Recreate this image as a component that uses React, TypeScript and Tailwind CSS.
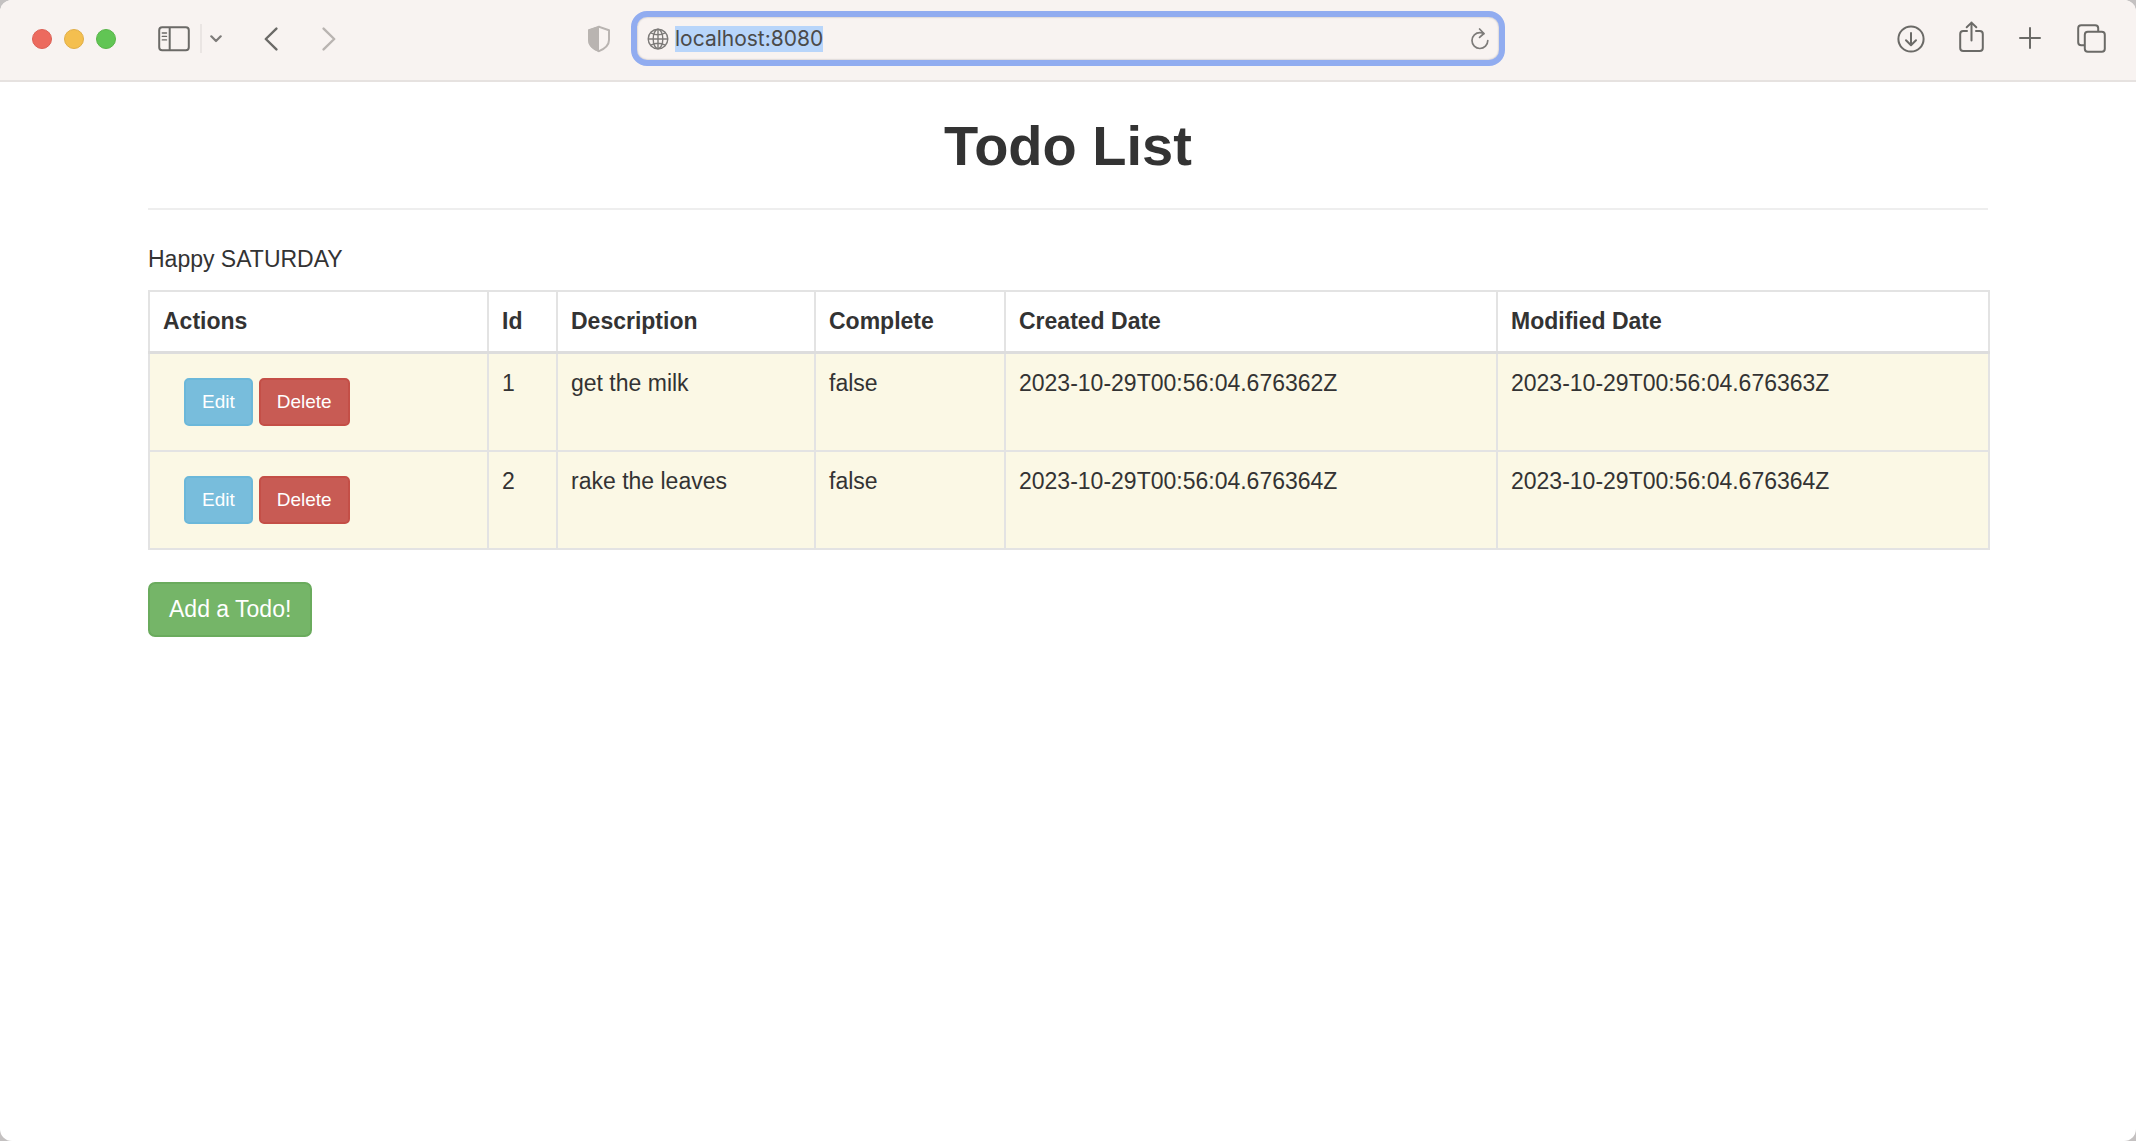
import { useEffect, useRef, type ReactNode } from "react";

const todos = [
  {
    id: 1,
    description: "get the milk",
    complete: "false",
    created: "2023-10-29T00:56:04.676362Z",
    modified: "2023-10-29T00:56:04.676363Z",
  },
  {
    id: 2,
    description: "rake the leaves",
    complete: "false",
    created: "2023-10-29T00:56:04.676364Z",
    modified: "2023-10-29T00:56:04.676364Z",
  },
];

const columns = [
  { title: "Actions", width: "w-[339px]" },
  { title: "Id", width: "w-[69px]" },
  { title: "Description", width: "w-[258px]" },
  { title: "Complete", width: "w-[190px]" },
  { title: "Created Date", width: "w-[492px]" },
  { title: "Modified Date", width: "w-[492px]" },
];

function IconButton({
  label,
  className = "",
  children,
}: {
  label: string;
  className?: string;
  children: ReactNode;
}) {
  return (
    <button
      type="button"
      aria-label={label}
      className={`flex shrink-0 items-center justify-center text-[#6b6a67] ${className}`}
    >
      {children}
    </button>
  );
}

function SidebarIcon() {
  return (
    <svg width="32" height="26" viewBox="0 0 32 26" fill="none" stroke="currentColor" strokeWidth="2">
      <rect x="1.2" y="1.2" width="29.6" height="23" rx="3" />
      <path d="M11.7 1.2v23" />
      <path d="M4.3 7h4.2M4.3 10.4h4.2M4.3 13.9h4.2" strokeWidth="1.4" strokeLinecap="round" />
    </svg>
  );
}

function ShieldIcon() {
  return (
    <svg width="24" height="28" viewBox="0 0 24 28" fill="none">
      <path
        d="M12 1.8 22 5.2V15c0 5.4-4 8.6-10 11.2C6 23.6 2 20.4 2 15V5.2Z"
        stroke="#b9b4b1"
        strokeWidth="2"
        strokeLinejoin="round"
      />
      <path d="M12 1 1.2 4.7V15c0 6 4.3 9.4 10.8 12.2Z" fill="#b9b4b1" />
    </svg>
  );
}

function GlobeIcon() {
  return (
    <svg width="22" height="22" viewBox="0 0 22 22" fill="none" stroke="#7d7b79" strokeWidth="1.4">
      <circle cx="11" cy="11" r="9.8" />
      <ellipse cx="11" cy="11" rx="4.8" ry="9.8" />
      <path d="M11 1.2v19.6M1.2 11h19.6M3.8 4.8c4.3 2.4 10.1 2.4 14.4 0M3.8 17.2c4.3-2.4 10.1-2.4 14.4 0" />
    </svg>
  );
}

function ReloadIcon() {
  return (
    <svg width="18" height="22" viewBox="0 0 18 22" fill="none" stroke="#7d7b79" strokeWidth="1.7" strokeLinecap="round" strokeLinejoin="round">
      <path d="M16.8 12.6A7.9 7.9 0 1 1 9 4.7c1.300 0 2.600.2 3.800.8" />
      <path d="M8.600 1 12.900 5.500 8.600 9.400" />
    </svg>
  );
}

function DownloadIcon() {
  return (
    <svg width="28" height="28" viewBox="0 0 28 28" fill="none" stroke="currentColor" strokeWidth="2" strokeLinecap="round" strokeLinejoin="round">
      <circle cx="14" cy="14" r="12.6" />
      <path d="M14 8v12M9 15.3l5 4.9 5-4.9" />
    </svg>
  );
}

function ShareIcon() {
  return (
    <svg width="25" height="32" viewBox="0 0 25 32" fill="none" stroke="currentColor" strokeWidth="2" strokeLinecap="round" strokeLinejoin="round">
      <path d="M8 10H4.2A3 3 0 0 0 1.2 13v14a3 3 0 0 0 3 3h16.600a3 3 0 0 0 3-3V13a3 3 0 0 0-3-3H17" />
      <path d="M12.5 19.5V1.6M7.7 6.3l4.8-4.7 4.8 4.7" />
    </svg>
  );
}

function PlusIcon() {
  return (
    <svg width="22" height="22" viewBox="0 0 22 22" fill="none" stroke="currentColor" strokeWidth="2" strokeLinecap="round">
      <path d="M11 1v20M1 11h20" />
    </svg>
  );
}

function TabsIcon() {
  return (
    <svg width="29" height="29" viewBox="0 0 29 29" fill="none" stroke="currentColor" strokeWidth="2">
      <rect x="7.8" y="7.8" width="20" height="20" rx="3" />
      <path d="M7.8 21.2H4.2a3 3 0 0 1-3-3v-14a3 3 0 0 1 3-3h14a3 3 0 0 1 3 3v3.6" />
    </svg>
  );
}

function Toolbar() {
  const address = useRef<HTMLInputElement>(null);

  useEffect(() => {
    address.current?.focus();
    address.current?.select();
  }, []);

  return (
    <header className="flex h-[82px] items-center border-b-2 border-[#e6e2e0] bg-[#f8f3f1] pb-[3px]">
      <div className="flex flex-1 items-center pl-8">
        <div className="flex gap-3">
          <button type="button" aria-label="Close window" className="size-5 rounded-full border border-[#dc6055] bg-[#ec6a5e]" />
          <button type="button" aria-label="Minimize window" className="size-5 rounded-full border border-[#e0ae48] bg-[#f4bf4f]" />
          <button type="button" aria-label="Zoom window" className="size-5 rounded-full border border-[#58b549] bg-[#61c554]" />
        </div>
        <IconButton label="Show sidebar" className="ml-[42px]">
          <SidebarIcon />
        </IconButton>
        <div className="ml-[10px] h-[29px] w-[2px] bg-[#eae5e3]" />
        <IconButton label="Sidebar options" className="ml-2">
          <svg width="12" height="8" viewBox="0 0 12 8" fill="none" stroke="#7d7b79" strokeWidth="2.2" strokeLinecap="round" strokeLinejoin="round">
            <path d="M1.3 1.3 6 6l4.7-4.7" />
          </svg>
        </IconButton>
        <IconButton label="Back" className="ml-[42px]">
          <svg width="14" height="24" viewBox="0 0 14 24" fill="none" stroke="currentColor" strokeWidth="2.4" strokeLinecap="round" strokeLinejoin="round">
            <path d="M12.4 1.6 1.8 12l10.600 10.400" />
          </svg>
        </IconButton>
        <IconButton label="Forward" className="ml-[44px]">
          <svg width="14" height="24" viewBox="0 0 14 24" fill="none" stroke="#b9b4b1" strokeWidth="2.4" strokeLinecap="round" strokeLinejoin="round">
            <path d="M1.6 1.6 12.200 12 1.600 22.400" />
          </svg>
        </IconButton>
        <IconButton label="Privacy report" className="mr-5 ml-auto">
          <ShieldIcon />
        </IconButton>
      </div>

      <div className="flex h-[55px] w-[874px] shrink items-center rounded-2xl border-6 border-[#91acf0] px-[10px] shadow-[inset_0_0_2px_#a8a5a8]">
        <GlobeIcon />
        <input
          ref={address}
          type="text"
          aria-label="Address"
          defaultValue="localhost:8080"
          className="ml-[6px] h-[26px] min-w-0 flex-1 bg-transparent font-['Inter',sans-serif] text-[21px] leading-[26px] text-[#4b4a49] outline-none selection:bg-[#b8d5fa] selection:text-[#4b4a49]"
        />
        <IconButton label="Reload page">
          <ReloadIcon />
        </IconButton>
      </div>

      <div className="flex flex-1 items-center justify-end pr-[30px] pl-[2px]">
        <IconButton label="Downloads">
          <DownloadIcon />
        </IconButton>
        <IconButton label="Share" className="ml-[34px] pb-1">
          <ShareIcon />
        </IconButton>
        <IconButton label="New tab" className="ml-[35px] pb-[2px]">
          <PlusIcon />
        </IconButton>
        <IconButton label="Tab overview" className="ml-[36px]">
          <TabsIcon />
        </IconButton>
      </div>
    </header>
  );
}

function TodoTable() {
  return (
    <table className="w-full table-fixed border-collapse border-2 border-[#e3e3e3]">
      <thead>
        <tr>
          {columns.map((column) => (
            <th
              key={column.title}
              scope="col"
              className={`${column.width} border-2 border-b-3 border-[#e3e3e3] border-b-[#dddddd] p-[13px] text-left font-bold`}
            >
              {column.title}
            </th>
          ))}
        </tr>
      </thead>
      <tbody>
        {todos.map((todo) => (
          <tr key={todo.id} className="h-[98px] bg-[#fbf8e5] align-top">
            <td className="border-2 border-[#e3e3e3] px-[34px] pt-6">
              <div className="flex gap-[6px]">
                <a
                  href={`#edit-${todo.id}`}
                  className="rounded-[5px] border-2 border-[#6bb8da] bg-[#78bddc] px-4 py-2 text-[19px] leading-7 text-white"
                >
                  Edit
                </a>
                <a
                  href={`#delete-${todo.id}`}
                  className="rounded-[5px] border-2 border-[#c44f47] bg-[#c85b54] px-4 py-2 text-[19px] leading-7 text-white"
                >
                  Delete
                </a>
              </div>
            </td>
            <td className="border-2 border-[#e3e3e3] p-[13px]">{todo.id}</td>
            <td className="border-2 border-[#e3e3e3] p-[13px]">{todo.description}</td>
            <td className="border-2 border-[#e3e3e3] p-[13px]">{todo.complete}</td>
            <td className="border-2 border-[#e3e3e3] p-[13px]">{todo.created}</td>
            <td className="border-2 border-[#e3e3e3] p-[13px]">{todo.modified}</td>
          </tr>
        ))}
      </tbody>
    </table>
  );
}

export default function App() {
  return (
    <div className="bg-[#c4c1c1]">
      <div className="min-h-screen overflow-hidden rounded-[12px] bg-white">
        <Toolbar />
        <main className="mx-auto max-w-[1840px] font-['Liberation_Sans',Arial,sans-serif] text-[23px] leading-[33px] text-[#333333]">
          <h1 className="pt-8 text-center text-[56px] leading-[64px] font-bold">Todo List</h1>
          <hr className="mt-[30px] border-t-2 border-[#eeeeee]" />
          <p className="mt-[33px] mb-[14px]">Happy SATURDAY</p>
          <TodoTable />
          <a
            href="#add"
            className="mt-8 inline-block rounded-[7px] border-2 border-[#6aab5d] bg-[#75b568] px-[19px] py-[9px] text-white"
          >
            Add a Todo!
          </a>
        </main>
      </div>
    </div>
  );
}
